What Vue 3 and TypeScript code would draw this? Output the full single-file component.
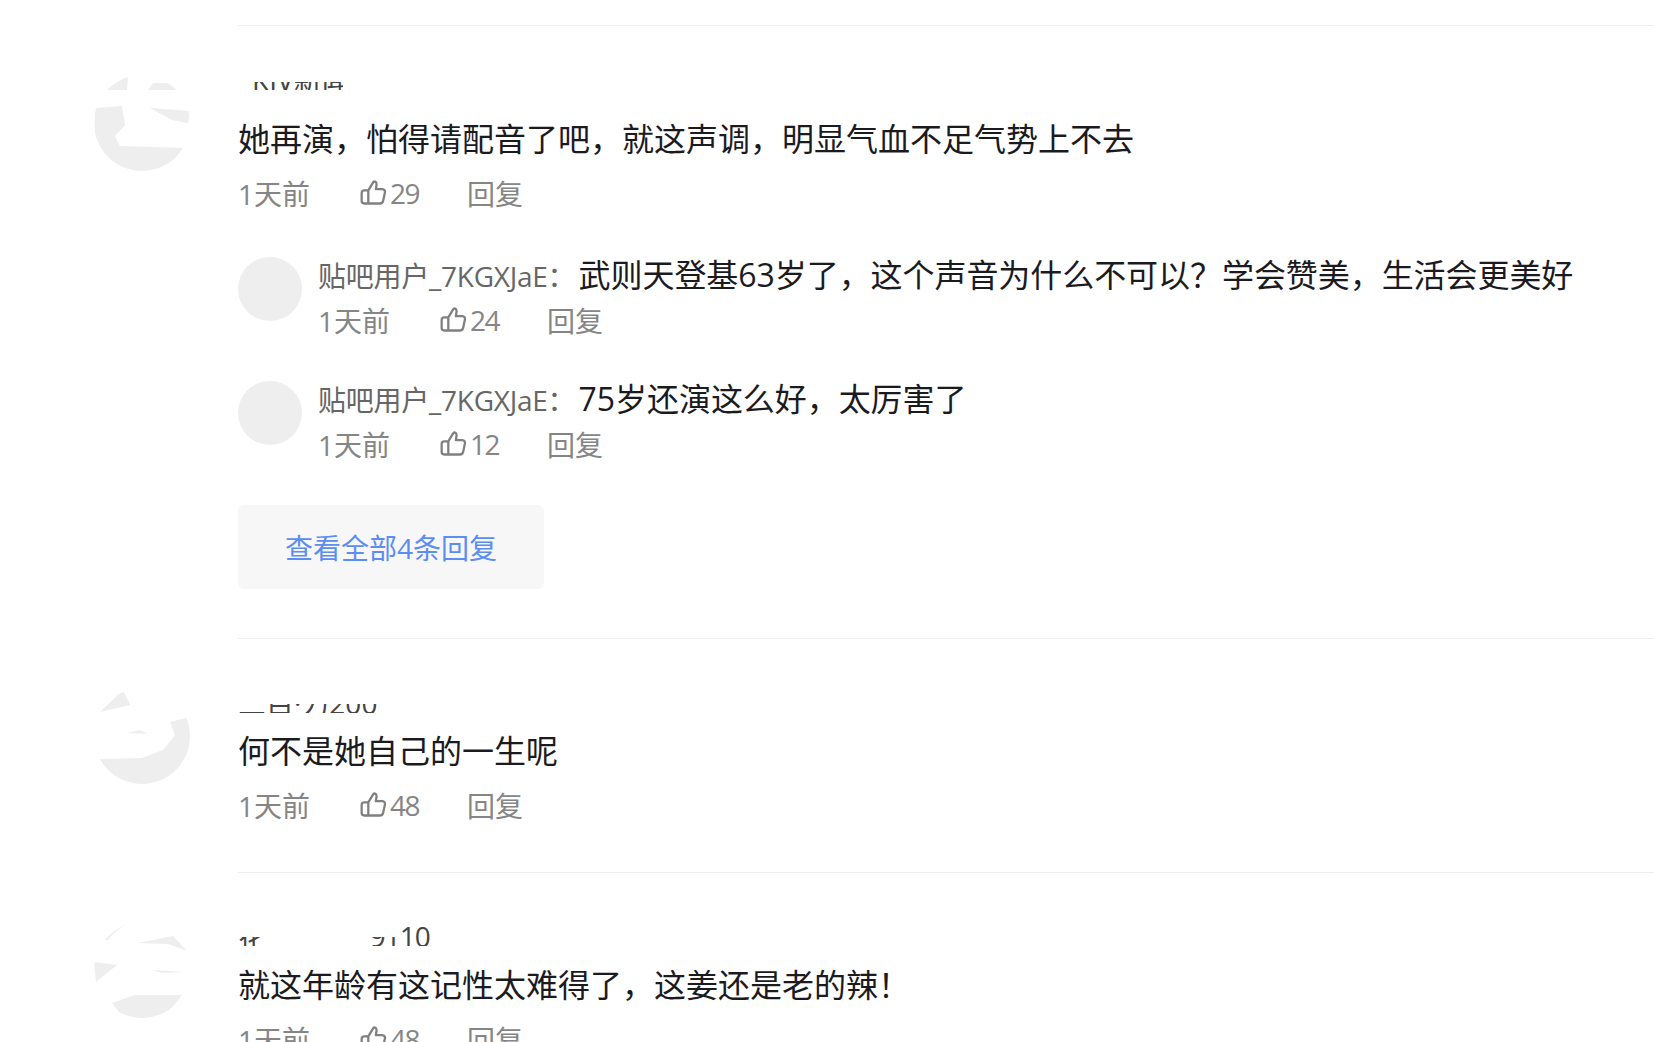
<script setup lang="ts">
interface Sub { likes: number; text: string }
interface Item {
  id: number
  name: string
  nameClass: string
  text: string
  likes: number
  pieces: string[]
  subs: Sub[]
  more?: string
}
const items: Item[] = [
  {
    id: 1,
    name: 'KIV新闻',
    nameClass: 'n1',
    text: '她再演，怕得请配音了吧，就这声调，明显气血不足气势上不去',
    likes: 29,
    pieces: [
      'M5 15 L34 0 L33 15 Z',
      'M54 15 L59 8 L74 8 L83 15 Z',
      'M1 33 L28 31 L31 50 L21 61 L26 71 L89 73 L96 96 L0 96 Z',
      'M56 33 L96 36 L94 48 L78 45 Z'
    ],
    subs: [
      { likes: 24, text: '武则天登基63岁了，这个声音为什么不可以？学会赞美，生活会更美好' },
      { likes: 12, text: '75岁还演这么好，太厉害了' }
    ],
    more: '查看全部4条回复'
  },
  {
    id: 2,
    name: '三目·力2000·',
    nameClass: 'n2',
    text: '何不是她自己的一生呢',
    likes: 48,
    pieces: [
      'M6 24 L29 2 L36 17 Z',
      'M34 45 L46 42 L54 46 Z',
      'M6 71 L48 70 L69 62 L81 47 L76 34 L96 29 L96 96 L0 96 Z'
    ],
    subs: []
  },
  {
    id: 3,
    name: '花生用户  _9110',
    nameClass: 'n3',
    text: '就这年龄有这记性太难得了，这姜还是老的辣！',
    likes: 48,
    pieces: [
      'M11 18 A48 48 0 0 1 33 2 Q20 9 14 18 Z',
      'M44 21 L79 14 L93 29 L74 22 Z',
      'M0 40 L23 43 L2 60 Z',
      'M58 48 L91 50 L68 51 Z',
      'M18 81 L41 73 L88 73 L70 96 L30 96 Z'
    ],
    subs: []
  }
]
const subName = '贴吧用户_7KGXJaE'
</script>

<template>
  <div class="page">
    <div class="item" v-for="item in items" :key="item.id">
      <svg class="avatar" viewBox="0 0 96 96" aria-hidden="true">
        <clipPath :id="`av${item.id}`"><circle cx="48" cy="48" r="48" /></clipPath>
        <g :clip-path="`url(#av${item.id})`">
          <path v-for="(d, i) in item.pieces" :key="i" :d="d" fill="#eeeeee" />
        </g>
      </svg>
      <div class="main" :class="`m${item.id}`">
        <div class="name" :class="item.nameClass">{{ item.name }}</div>
        <div class="text">{{ item.text }}</div>
        <div class="meta">
          <span class="time">1天前</span>
          <span class="like">
            <svg class="thumb" viewBox="0 0 26 26" fill="none" stroke="#808080" stroke-width="2.2" stroke-linejoin="round" stroke-linecap="round">
              <path d="M8 11 L12.5 3.5 C13.2 1.8 16 2 16 5 L15.3 9.8 H21.5 C23.4 9.8 24.4 11.4 24 13 L22.3 21 C22 22.8 20.8 23.6 19.2 23.6 H4.2 C2.6 23.6 1.6 22.6 1.6 21 V13.4 C1.6 11.8 2.6 11 4.2 11 H8 V23.6" />
            </svg>
            <span class="num">{{ item.likes }}</span>
          </span>
          <span class="reply">回复</span>
        </div>
        <div v-if="item.subs.length" class="subs">
          <div class="sub" v-for="s in item.subs" :key="s.likes">
            <div class="sub-avatar"></div>
            <div class="sub-main">
              <div class="sub-line"><span class="sub-name">{{ subName }}</span><span class="sub-colon">：</span><span class="sub-text">{{ s.text }}</span></div>
              <div class="meta sub-meta">
                <span class="time">1天前</span>
                <span class="like">
                  <svg class="thumb" viewBox="0 0 26 26" fill="none" stroke="#808080" stroke-width="2.2" stroke-linejoin="round" stroke-linecap="round">
                    <path d="M8 11 L12.5 3.5 C13.2 1.8 16 2 16 5 L15.3 9.8 H21.5 C23.4 9.8 24.4 11.4 24 13 L22.3 21 C22 22.8 20.8 23.6 19.2 23.6 H4.2 C2.6 23.6 1.6 22.6 1.6 21 V13.4 C1.6 11.8 2.6 11 4.2 11 H8 V23.6" />
                  </svg>
                  <span class="num">{{ s.likes }}</span>
                </span>
                <span class="reply">回复</span>
              </div>
            </div>
          </div>
        </div>
        <div v-if="item.more" class="more">{{ item.more }}</div>
      </div>
    </div>
  </div>
</template>

<style>
html, body { background: #fff; overflow: hidden; }
</style>

<style scoped>
.page {
  width: 1654px;
  height: 1042px;
  overflow: hidden;
  padding-top: 25px;
  box-sizing: border-box;
  font-family: "Open Sans", "Noto Sans CJK SC", sans-serif;
  color: #1a1a1f;
}
.item {
  display: flex;
  align-items: flex-start;
  padding-left: 94px;
}
.avatar {
  width: 96px;
  height: 96px;
  margin-top: 50px;
  margin-right: 48px;
  flex: none;
}
.main {
  flex: 1;
  border-top: 1px solid #efefef;
  padding: 49px 0 0;
  min-width: 0;
}
.name {
  height: 40px;
  font-size: 28px;
  color: #444;
  white-space: pre;
}
.n1 {
  line-height: 10px;
  text-indent: 14px;
  clip-path: polygon(14px 7px, 105px 7px, 105px 15px, 14px 15px);
}
.n2 {
  height: 39px;
  line-height: 30px;
  clip-path: polygon(0 16px, 140px 16px, 140px 25px, 0 25px);
}
.n3 {
  height: 39px;
  line-height: 28px;
  letter-spacing: -1px;
  clip-path: polygon(0 15px, 24px 15px, 24px 24px, 134px 24px, 134px 15px, 162px 15px, 162px 5px, 192px 5px, 192px 24px, 0 24px);
}
.text {
  font-size: 32px;
  line-height: 48px;
  color: #1a1a1f;
}
.meta {
  display: flex;
  align-items: center;
  height: 40px;
  margin-top: 10px;
  font-size: 28px;
  color: #858585;
}
.time { width: 122px; }
.like {
  display: flex;
  align-items: center;
  gap: 3px;
  width: 107px;
}
.num { letter-spacing: -1.5px; }
.thumb { width: 27px; height: 27px; margin-bottom: 2px; }
.m1 { padding-bottom: 49px; }
.m2 { padding-bottom: 47px; }
.subs { margin-top: 44px; display: flex; flex-direction: column; gap: 41px; }
.sub { display: flex; align-items: flex-start; }
.sub-avatar {
  width: 64px;
  height: 64px;
  border-radius: 50%;
  background: #eeeeee;
  margin-right: 16px;
  flex: none;
}
.sub-main { min-width: 0; }
.sub-line { line-height: 44px; margin-top: -4px; white-space: nowrap; }
.sub-name { font-size: 28px; color: #666; letter-spacing: -0.25px; }
.sub-colon { font-size: 28px; color: #666; margin-right: 3px; }
.sub-text { font-size: 32px; color: #1a1a1f; letter-spacing: -0.06px; }
.sub-meta { margin-top: -3px; }
.more {
  width: 306px;
  height: 84px;
  line-height: 86px;
  margin-top: 41px;
  padding-left: 47px;
  box-sizing: border-box;
  background: #f7f7f8;
  border-radius: 6px;
  font-size: 28px;
  color: #5c8df0;
}
</style>
